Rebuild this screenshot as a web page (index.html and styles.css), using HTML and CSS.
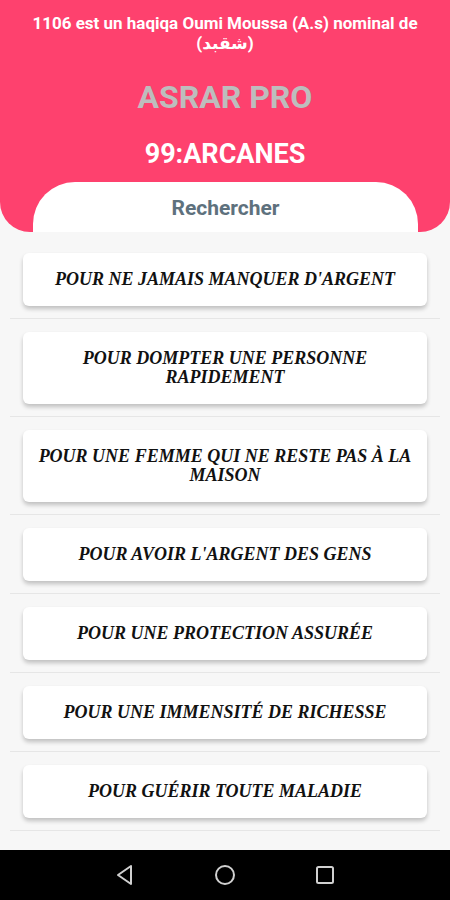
FILE: index.html
```html
<!DOCTYPE html>
<html lang="fr">
<head>
<meta charset="UTF-8" />
<title>Asrar Pro</title>
<link rel="stylesheet" href="styles.css">
</head>
<body>
  <div class="screen">
    <div class="header">
      <p class="info">1106 est un haqiqa Oumi Moussa (A.s) nominal de (شقبد)</p>
      <h1 class="app-title">ASRAR PRO</h1>
      <h2 class="count">99:ARCANES</h2>
      <div class="search">Rechercher</div>
    </div>

    <div class="list">
      <div class="row"><div class="card">POUR NE JAMAIS MANQUER D'ARGENT</div></div>
      <div class="row"><div class="card">POUR DOMPTER UNE PERSONNE RAPIDEMENT</div></div>
      <div class="row"><div class="card">POUR UNE FEMME QUI NE RESTE PAS À LA MAISON</div></div>
      <div class="row"><div class="card">POUR AVOIR L'ARGENT DES GENS</div></div>
      <div class="row"><div class="card">POUR UNE PROTECTION ASSURÉE</div></div>
      <div class="row"><div class="card">POUR UNE IMMENSITÉ DE RICHESSE</div></div>
      <div class="row"><div class="card">POUR GUÉRIR TOUTE MALADIE</div></div>
    </div>

    <div class="navbar">
      <svg width="22" height="22" viewBox="0 0 22 22"><path d="M17 2 L4 11 L17 20 Z" fill="none" stroke="#d0d0d0" stroke-width="2" stroke-linejoin="round"/></svg>
      <svg width="22" height="22" viewBox="0 0 22 22"><circle cx="11" cy="11" r="9" fill="none" stroke="#d0d0d0" stroke-width="2"/></svg>
      <svg width="22" height="22" viewBox="0 0 22 22"><rect x="3" y="3" width="16" height="16" rx="1.5" fill="none" stroke="#d0d0d0" stroke-width="2"/></svg>
    </div>
  </div>
</body>
</html>
```

FILE: styles.css
```css
body{
  margin: 0;
  background: #f7f7f7;
  font-family: Roboto, "Liberation Sans", "DejaVu Sans", sans-serif;
}

.screen{
  width: 450px;
  height: 900px;
  display: flex;
  flex-direction: column;
  overflow: hidden;
}

.header{
  background-color: #fe416e;
  border-radius: 0 0 30px 30px;
  display: flex;
  flex-direction: column;
  align-items: center;
  text-align: center;
  padding-top: 13px;
}

.info{
  margin: 0;
  padding: 0 20px;
  color: white;
  font-size: 17px;
  line-height: 20px;
  font-weight: bold;
}

.app-title{
  margin: 25px 0 0;
  color: #bdbdbd;
  font-size: 32px;
  line-height: 38px;
  font-weight: bold;
}

.count{
  margin: 22px 0 0;
  color: white;
  font-size: 27px;
  line-height: 32px;
  font-weight: bold;
}

.search{
  margin-top: 12px;
  align-self: stretch;
  margin-left: 33px;
  margin-right: 32px;
  height: 50px;
  background: white;
  border-radius: 42px 42px 0 0;
  color: #5e717d;
  font-size: 21px;
  font-weight: bold;
  line-height: 52px;
}

.list{
  flex: 1;
  padding: 8px 10px 0;
}

.row{
  padding: 13px 13px 12px;
  border-bottom: 1px solid #e6e6e6;
}

.card{
  background: white;
  border-radius: 6px;
  box-shadow: 0 3px 4px rgba(0, 0, 0, 0.22);
  padding: 17px 10px;
  text-align: center;
  font-family: "Liberation Serif", "DejaVu Serif", serif;
  font-style: italic;
  font-weight: bold;
  font-size: 18px;
  line-height: 19px;
  color: #111;
}

.navbar{
  height: 50px;
  background: black;
  display: flex;
  justify-content: center;
  align-items: center;
  gap: 78px;
}
```
